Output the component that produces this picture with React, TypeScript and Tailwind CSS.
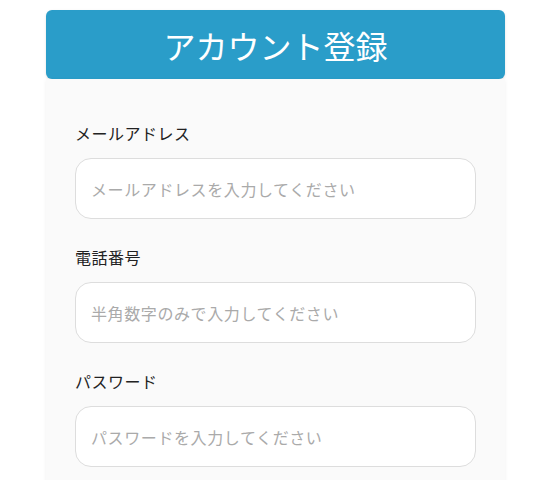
const fields = [
  { label: "メールアドレス", placeholder: "メールアドレスを入力してください", type: "email" },
  { label: "電話番号", placeholder: "半角数字のみで入力してください", type: "tel" },
  { label: "パスワード", placeholder: "パスワードを入力してください", type: "password" },
];

export default function App() {
  return (
    <main
      className="min-h-screen bg-white pt-[10px] pl-[46px] pr-[48px]"
      style={{ fontFamily: '"Noto Sans CJK JP", "Noto Sans", sans-serif' }}
    >
      <div className="w-[459px]">
        <h1 className="h-[69px] flex items-center justify-center rounded-md bg-[#2a9dc9] text-white text-[32px] leading-none shadow-sm">
          アカウント登録
        </h1>
        <form className="bg-[#fafafa] rounded-b-md shadow-[0_1px_4px_rgba(0,0,0,0.06)] px-[29px] pt-[42px] pb-10 flex flex-col gap-[26px]">
          {fields.map((f) => (
            <div key={f.label} className="flex flex-col gap-[13px]">
              <label className="text-base leading-6 tracking-[0.5px] text-[#222]">{f.label}</label>
              <input
                type={f.type}
                placeholder={f.placeholder}
                className="h-[61px] rounded-2xl border border-[#dddddd] bg-white px-[15px] text-base tracking-[0.6px] text-[#222] placeholder:text-[#aaaaaa] outline-none"
              />
            </div>
          ))}
        </form>
      </div>
    </main>
  );
}
